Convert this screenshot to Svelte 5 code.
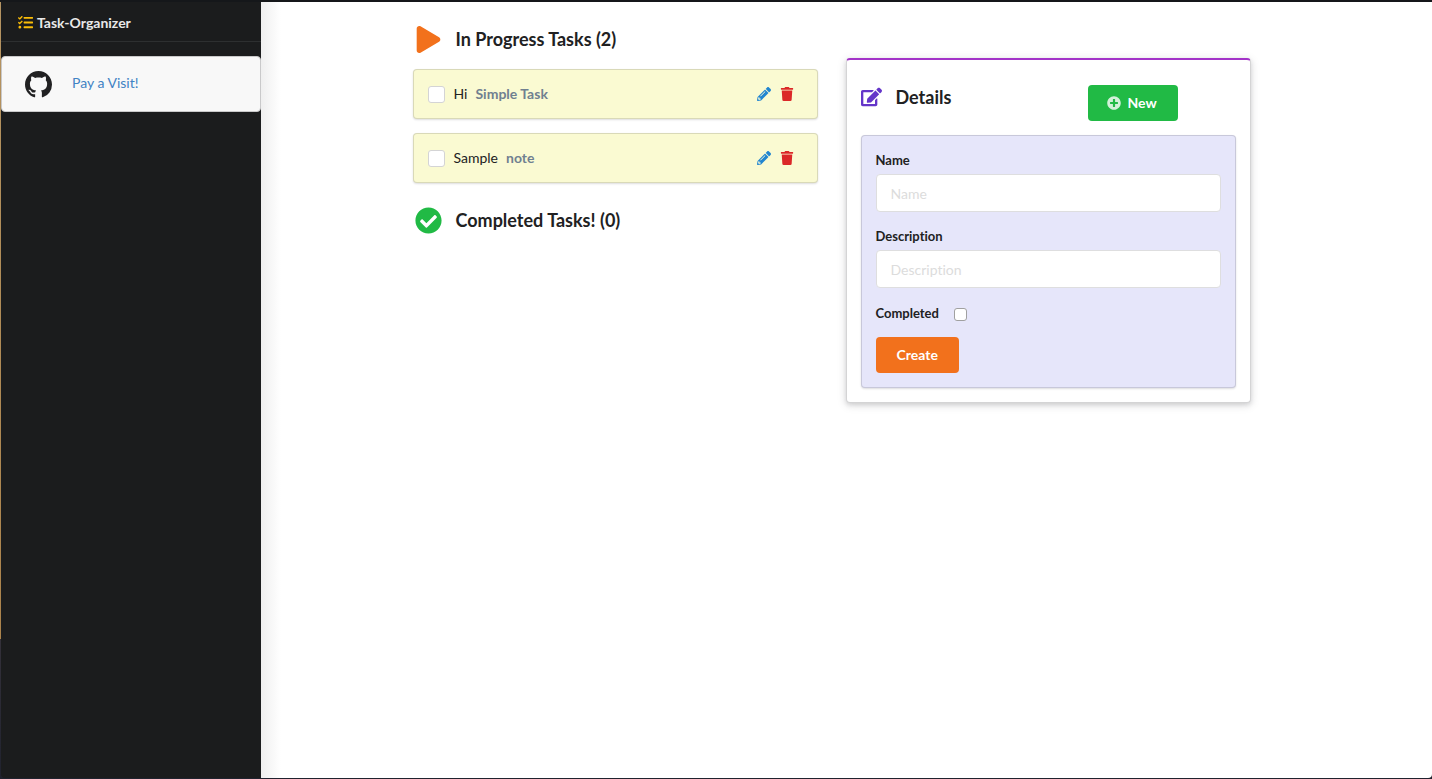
<script>
  let tasks = $state([
    { id: 1, name: 'Hi', description: 'Simple Task', completed: false },
    { id: 2, name: 'Sample', description: 'note', completed: false }
  ]);
  let nextId = 3;
  let editingId = $state(null);
  let name = $state('');
  let description = $state('');
  let completed = $state(false);

  let inProgress = $derived(tasks.filter((t) => !t.completed));
  let done = $derived(tasks.filter((t) => t.completed));

  function reset() {
    editingId = null;
    name = '';
    description = '';
    completed = false;
  }

  function edit(task) {
    editingId = task.id;
    name = task.name;
    description = task.description;
    completed = task.completed;
  }

  function remove(task) {
    tasks = tasks.filter((t) => t.id !== task.id);
    if (editingId === task.id) reset();
  }

  function save(event) {
    event.preventDefault();
    if (!name) return;
    if (editingId === null) {
      tasks.push({ id: nextId++, name, description, completed });
    } else {
      tasks = tasks.map((t) => (t.id === editingId ? { ...t, name, description, completed } : t));
    }
    reset();
  }
</script>

{#snippet taskCard(task)}
  <li class="segment task">
    <label class="task-label">
      <input class="task-check" type="checkbox" bind:checked={task.completed} />
      <span>{task.name}</span>
      <strong>{task.description}</strong>
    </label>
    <div class="actions">
      <button class="icon-button edit" type="button" aria-label="Edit" onclick={() => edit(task)}>
        <svg width="14" height="14" viewBox="0 0 512 512"><path d="M497.9 142.1l-46.1 46.1c-4.7 4.7-12.3 4.7-17 0l-111-111c-4.7-4.7-4.7-12.3 0-17l46.1-46.1c18.7-18.7 49.1-18.7 67.9 0l60.1 60.1c18.8 18.7 18.8 49.1 0 67.9zM284.2 99.8L21.6 362.4.4 483.9c-2.9 16.4 11.4 30.6 27.8 27.8l121.5-21.3 262.6-262.6c4.7-4.7 4.7-12.3 0-17l-111-111c-4.8-4.7-12.4-4.7-17.1 0zM124.1 339.9c-5.5-5.5-5.5-14.3 0-19.8l154-154c5.5-5.5 14.3-5.5 19.8 0s5.5 14.3 0 19.8l-154 154c-5.5 5.5-14.3 5.5-19.8 0zM88 424h48v36.3l-64.5 11.3-31.1-31.1L51.7 376H88v48z" /></svg>
      </button>
      <button class="icon-button delete" type="button" aria-label="Delete" onclick={() => remove(task)}>
        <svg width="14" height="14" viewBox="0 0 448 512"><path d="M432 32H312l-9.4-18.7A24 24 0 0 0 281.1 0H166.8a23.72 23.72 0 0 0-21.4 13.3L136 32H16A16 16 0 0 0 0 48v32a16 16 0 0 0 16 16h416a16 16 0 0 0 16-16V48a16 16 0 0 0-16-16zM53.2 467a48 48 0 0 0 47.9 45h245.8a48 48 0 0 0 47.9-45L416 128H32z" /></svg>
      </button>
    </div>
  </li>
{/snippet}

<div class="shell">
  <aside class="sidebar">
    <div class="brand">
      <svg width="15" height="15" viewBox="0 0 512 512"><path d="M139.61 35.5a12 12 0 0 0-17 0L58.93 98.81l-22.7-22.12a12 12 0 0 0-17 0L3.53 92.41a12 12 0 0 0 0 17l47.59 47.4a12.78 12.78 0 0 0 17.61 0l15.59-15.62L156.52 69a12.09 12.09 0 0 0 .09-17zm0 159.19a12 12 0 0 0-17 0l-63.68 63.72-22.7-22.1a12 12 0 0 0-17 0L3.53 252a12 12 0 0 0 0 17L51 316.5a12.77 12.77 0 0 0 17.6 0l15.7-15.69 72.2-72.22a12 12 0 0 0 .09-16.9zM64 368c-26.49 0-48.59 21.5-48.59 48S37.53 464 64 464a48 48 0 0 0 0-96zm432 16H208a16 16 0 0 0-16 16v32a16 16 0 0 0 16 16h288a16 16 0 0 0 16-16v-32a16 16 0 0 0-16-16zm0-320H208a16 16 0 0 0-16 16v32a16 16 0 0 0 16 16h288a16 16 0 0 0 16-16V80a16 16 0 0 0-16-16zm0 160H208a16 16 0 0 0-16 16v32a16 16 0 0 0 16 16h288a16 16 0 0 0 16-16v-32a16 16 0 0 0-16-16z" /></svg>
      <span>Task-Organizer</span>
    </div>
    <div class="visit">
      <svg width="27" height="27" viewBox="0 0 16 16"><path d="M8 0C3.58 0 0 3.58 0 8c0 3.54 2.29 6.53 5.47 7.59.4.07.55-.17.55-.38 0-.19-.01-.82-.01-1.49-2.01.37-2.53-.49-2.69-.94-.09-.23-.48-.94-.82-1.13-.28-.15-.68-.52-.01-.53.63-.01 1.08.58 1.23.82.72 1.21 1.87.87 2.33.66.07-.52.28-.87.51-1.07-1.78-.2-3.64-.89-3.64-3.95 0-.87.31-1.59.82-2.15-.08-.2-.36-1.02.08-2.12 0 0 .67-.21 2.2.82.64-.18 1.32-.27 2-.27.68 0 1.36.09 2 .27 1.53-1.04 2.2-.82 2.2-.82.44 1.1.16 1.92.08 2.12.51.56.82 1.27.82 2.15 0 3.07-1.87 3.75-3.65 3.95.29.25.54.73.54 1.48 0 1.07-.01 1.93-.01 2.2 0 .21.15.46.55.38A8.013 8.013 0 0016 8c0-4.42-3.58-8-8-8z" /></svg>
      <a href="https://github.com">Pay a Visit!</a>
    </div>
  </aside>

  <main class="content">
    <div class="columns">
      <div class="lists">
        <h2>
          <svg class="play" width="27" height="27" viewBox="0 0 448 512"><path d="M424.4 214.7L72.4 6.6C43.8-10.3 0 6.1 0 47.9V464c0 37.5 40.7 60.1 72.4 41.3l352-208c31.4-18.5 31.5-64.1 0-82.6z" /></svg>
          <span>In Progress Tasks ({inProgress.length})</span>
        </h2>
        <ul>
          {#each inProgress as task (task.id)}
            {@render taskCard(task)}
          {/each}
        </ul>
        <h2>
          <svg class="check" width="27" height="27" viewBox="0 0 512 512"><path d="M504 256c0 136.967-111.033 248-248 248S8 392.967 8 256 119.033 8 256 8s248 111.033 248 248zM227.314 387.314l184-184c6.248-6.248 6.248-16.379 0-22.627l-22.627-22.627c-6.248-6.249-16.379-6.249-22.628 0L216 308.118l-70.059-70.059c-6.248-6.248-16.379-6.248-22.628 0l-22.627 22.627c-6.248 6.248-6.248 16.379 0 22.627l104 104c6.249 6.249 16.379 6.249 22.628.001z" /></svg>
          <span>Completed Tasks! ({done.length})</span>
        </h2>
        <ul>
          {#each done as task (task.id)}
            {@render taskCard(task)}
          {/each}
        </ul>
      </div>

      <section class="details">
        <header>
          <h2>
            <svg class="compose" width="21" height="20" viewBox="0 0 576 512"><path d="M402.6 83.2l90.2 90.2c3.8 3.8 3.8 10 0 13.8L274.4 405.6l-92.8 10.3c-12.4 1.4-22.9-9.1-21.5-21.5l10.3-92.8L388.8 83.2c3.8-3.8 10-3.8 13.8 0zm162-22.9l-48.8-48.8c-15.2-15.2-39.9-15.2-55.2 0l-35.4 35.4c-3.8 3.8-3.8 10 0 13.8l90.2 90.2c3.8 3.8 10 3.8 13.8 0l35.4-35.4c15.2-15.3 15.2-40 0-55.2zM384 346.2V448H64V128h229.8c3.2 0 6.2-1.3 8.5-3.5l40-40c7.6-7.6 2.2-20.5-8.5-20.5H48C21.5 64 0 85.5 0 112v352c0 26.5 21.5 48 48 48h352c26.5 0 48-21.5 48-48V306.2c0-10.7-12.9-16-20.5-8.5l-40 40c-2.2 2.3-3.5 5.3-3.5 8.5z" /></svg>
            <span>Details</span>
          </h2>
          <button class="button new" type="button" onclick={reset}>
            <svg width="14" height="14" viewBox="0 0 512 512"><path d="M256 8C119 8 8 119 8 256s111 248 248 248 248-111 248-248S393 8 256 8zm144 276c0 6.6-5.4 12-12 12h-92v92c0 6.6-5.4 12-12 12h-56c-6.6 0-12-5.4-12-12v-92h-92c-6.6 0-12-5.4-12-12v-56c0-6.6 5.4-12 12-12h92v-92c0-6.6 5.4-12 12-12h56c6.6 0 12 5.4 12 12v92h92c6.6 0 12 5.4 12 12v56z" /></svg>
            <span>New</span>
          </button>
        </header>
        <form class="segment" onsubmit={save}>
          <div class="field">
            <label for="name">Name</label>
            <input id="name" class="text" type="text" placeholder="Name" bind:value={name} />
          </div>
          <div class="field">
            <label for="description">Description</label>
            <input id="description" class="text" type="text" placeholder="Description" bind:value={description} />
          </div>
          <div class="inline-field">
            <label for="completed">Completed</label>
            <input id="completed" class="mini-check" type="checkbox" bind:checked={completed} />
          </div>
          <button class="button create" type="submit">{editingId === null ? 'Create' : 'Update'}</button>
        </form>
      </section>
    </div>
  </main>
</div>

<style>
  :global(body) {
    margin: 0;
  }

  .shell,
  .shell :global(*) {
    box-sizing: border-box;
  }

  .shell {
    display: flex;
    min-height: 100vh;
    padding: 2px 0 1px 1px;
    background: linear-gradient(#15171a 2px, #b59462 2px, #ab834c 82%, #34313a 82%, #20222e);
    color: #212122;
    font: 14px/20px Lato, "Liberation Sans", sans-serif;
    font-variant-ligatures: none;
  }

  svg {
    flex: none;
    fill: currentColor;
  }

  .sidebar {
    flex: 0 0 260px;
    border-bottom-left-radius: 4px;
    background: #1b1c1d;
  }

  .brand {
    display: flex;
    align-items: center;
    gap: 4px;
    height: 40px;
    padding: 2px 17px 0;
    border-bottom: 1px solid #2d2f30;
    color: #e9e9e9;
    font-weight: 700;
  }

  .brand svg {
    color: #fbbd08;
  }

  .visit {
    display: flex;
    align-items: center;
    gap: 20px;
    height: 56px;
    margin-top: 14px;
    padding: 0 23px;
    border: 1px solid #c9c9ca;
    border-radius: 4px;
    background: #f8f8f8;
  }

  .visit a {
    padding-bottom: 2px;
    color: #4183c4;
    text-decoration: none;
  }

  .content {
    flex: 1;
    padding: 20px 30px 20px 0;
    border-bottom-right-radius: 4px;
    background: linear-gradient(90deg, #efefef, #fff 20px);
  }

  .columns {
    display: grid;
    grid-template-columns: 1fr 1fr;
    align-items: start;
    gap: 28px;
    max-width: 838px;
    margin: 0 auto;
  }

  h2 {
    display: flex;
    align-items: center;
    gap: 14px;
    margin: 0;
    font-size: 18px;
    line-height: 24px;
    font-weight: 700;
  }

  .lists {
    display: flex;
    flex-direction: column;
  }

  .lists h2 {
    height: 34px;
    padding-left: 2px;
  }

  .play {
    color: #f2711c;
  }

  .check {
    color: #21ba45;
  }

  .compose {
    color: #6435c9;
  }

  ul {
    display: flex;
    flex-direction: column;
    gap: 14px;
    margin: 0;
    padding: 13px 0 20px;
    list-style: none;
  }

  .segment {
    border: 1px solid rgba(34, 36, 38, 0.15);
    border-radius: 4px;
    box-shadow: 0 1px 2px rgba(34, 36, 38, 0.15);
  }

  .task {
    display: flex;
    align-items: center;
    justify-content: space-between;
    height: 50px;
    padding: 0 23px 0 14px;
    background: #fafad2;
  }

  .task-label {
    display: flex;
    align-items: center;
    gap: 8px;
  }

  .task-label strong {
    color: #708090;
  }

  input[type="checkbox"] {
    flex: none;
    margin: 0;
    appearance: none;
    background: #fff;
  }

  .task-check {
    width: 17px;
    height: 17px;
    border: 1px solid #d4d4d5;
    border-radius: 3px;
  }

  .task-label .task-check {
    margin-right: 1px;
  }

  input[type="checkbox"]:checked {
    background: #2185d0;
  }

  .actions {
    display: flex;
    gap: 9px;
  }

  .icon-button {
    display: flex;
    padding: 0;
    border: 0;
    background: none;
    cursor: pointer;
  }

  .edit {
    color: #2185d0;
  }

  .delete {
    color: #db2828;
  }

  .details {
    margin-top: 36px;
    padding: 25px 14px 14px;
    border: 1px solid #d4d4d5;
    border-top: 2px solid #a333c8;
    border-radius: 4px;
    background: #fff;
    box-shadow: 0 2px 4px rgba(34, 36, 38, 0.12), 0 2px 10px rgba(34, 36, 38, 0.15);
  }

  header {
    display: grid;
    grid-template-columns: 227px auto;
    justify-content: start;
    align-items: start;
    margin-bottom: 14px;
  }

  .button {
    display: flex;
    align-items: center;
    gap: 7px;
    height: 36px;
    padding: 0 21px;
    border: 0;
    border-radius: 4px;
    color: #fff;
    font: inherit;
    font-weight: 700;
    cursor: pointer;
  }

  .new {
    padding: 0 21px 0 19px;
    background: #21ba45;
  }

  .new svg {
    opacity: 0.8;
  }

  .create {
    background: #f2711c;
  }

  form {
    padding: 14px;
    background: #e6e6fa;
  }

  form label {
    font-size: 13px;
    font-weight: 700;
  }

  .field {
    display: flex;
    flex-direction: column;
    gap: 4px;
    margin-bottom: 14px;
  }

  .text {
    width: 100%;
    height: 38px;
    padding: 0 14px;
    border: 1px solid #dededf;
    border-radius: 4px;
    outline: 0;
    background: #fff;
    color: inherit;
    font: inherit;
  }

  .text:focus {
    border-color: #85b7d9;
  }

  .text::placeholder {
    color: #dcdcdc;
    opacity: 1;
  }

  .inline-field {
    display: flex;
    align-items: end;
    gap: 15px;
    height: 21px;
    margin-bottom: 14px;
  }

  .mini-check {
    width: 13px;
    height: 13px;
    margin-bottom: 2px;
    border: 1px solid #a0a0a0;
    border-radius: 3px;
  }

  .inline-field .mini-check {
    margin-bottom: 2px;
  }

  @media (max-width: 900px) {
    .columns {
      grid-template-columns: 1fr;
      padding-left: 30px;
    }
  }
</style>
